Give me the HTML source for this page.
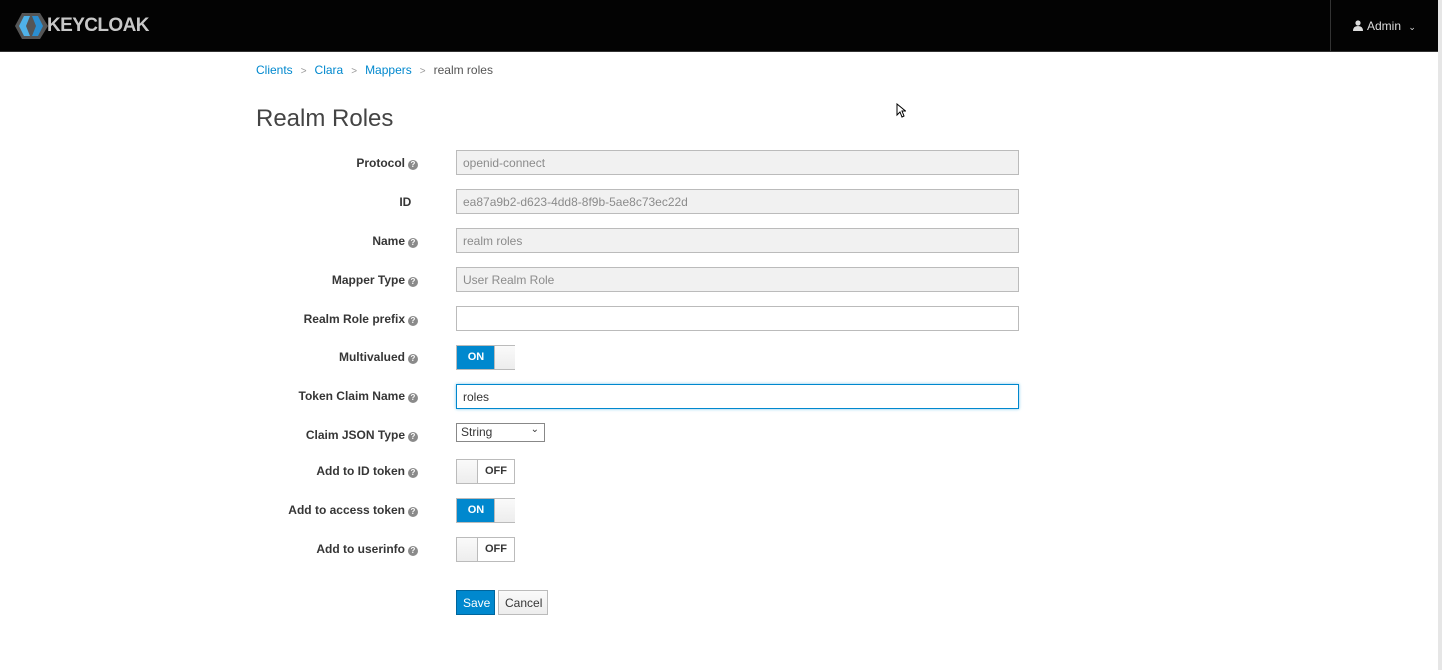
<!DOCTYPE html>
<html><head><style>
*{box-sizing:border-box;margin:0;padding:0}
body{width:1442px;height:670px;background:#fff;font-family:"Liberation Sans",sans-serif;font-size:12px;color:#363636;position:relative;overflow:hidden}
.hdr{position:absolute;left:0;top:0;width:1438px;height:52px;background:#030303;border-bottom:1px solid #333}
.sb{position:absolute;right:0;top:0;width:4px;height:670px;background:#e6e6e6}
.sep{position:absolute;left:1330px;top:0;width:1px;height:52px;background:#333}
.admin{position:absolute;left:1353px;top:19px;color:#ddd;font-size:12px}
.logo{position:absolute;left:14px;top:12px;height:28px}
.logo span{position:absolute;left:33px;top:3px;color:#c8c8c8;font-weight:bold;font-size:19px;letter-spacing:-0.6px}
.bc{position:absolute;left:256px;top:63px;font-size:12px;color:#555}
.bc a{color:#0088ce;text-decoration:none}
.bc i{font-style:normal;color:#999;margin:0 8px;font-size:10px}
h1{position:absolute;left:256px;top:105px;font-size:24px;font-weight:normal;color:#444}
.lbl{position:absolute;right:1024px;font-weight:bold;font-size:12px;text-align:right;white-space:nowrap;color:#363636}
.q{display:inline-block;width:10px;height:10px;border-radius:50%;background:#8a8a8a;color:#fff;font-size:8px;line-height:10px;text-align:center;margin-left:3px;vertical-align:0}
.inp{position:absolute;left:456px;width:563px;height:25px;border:1px solid #bbb;background:#f1f1f1;color:#8b8b8b;padding:5px 6px;font-size:12px}
.tg{position:absolute;left:456px;width:59px;height:25px;border:1px solid #bbb;background:#fff;font-size:11px;font-weight:bold}
.tg .on{position:absolute;left:0;top:0;width:38px;height:23px;background:#0088ce;color:#fff;text-align:center;line-height:23px}
.tg .knob{position:absolute;top:0;width:21px;height:23px;background:linear-gradient(#fafafa,#ededed);border-left:1px solid #bbb}
.tg .off{position:absolute;left:21px;top:0;width:36px;height:23px;text-align:center;line-height:23px;color:#363636;background:#fff}
.btn{position:absolute;top:590px;height:25px;font-size:12px;padding:5px 6px;border:1px solid #bbb}
</style></head><body>
<div class="hdr">
<div class="logo"><svg width="36" height="28" viewBox="0 0 36 28"><polygon points="8,1 26,1 34,14 26,27 8,27 1,14" fill="#555"/><polygon points="10,4 16,4 12,14 16,24 10,24 5,14" fill="#4fb2e8"/><polygon points="24,4 18,4 22,14 18,24 24,24 29,14" fill="#2b8ed0"/></svg><span>KEYCLOAK</span></div>
<div class="sep"></div>
<div class="admin"><svg width="10" height="11" viewBox="0 0 10 11" style="vertical-align:-1px;margin-right:4px"><circle cx="5" cy="3" r="2.6" fill="#ddd"/><path d="M0 11 Q0 6 5 6 Q10 6 10 11Z" fill="#ddd"/></svg>Admin <span style="font-size:9px;margin-left:4px">&#8964;</span></div>
</div>
<div class="sb"></div>
<div class="bc"><a>Clients</a><i>&gt;</i><a>Clara</a><i>&gt;</i><a>Mappers</a><i>&gt;</i>realm roles</div>
<h1>Realm Roles</h1>

<div class="lbl" style="top:156px">Protocol<span class="q">?</span></div>
<div class="inp" style="top:150px">openid-connect</div>
<div class="lbl" style="top:195px;right:1024px">ID&nbsp;&nbsp;</div>
<div class="inp" style="top:189px">ea87a9b2-d623-4dd8-8f9b-5ae8c73ec22d</div>
<div class="lbl" style="top:234px">Name<span class="q">?</span></div>
<div class="inp" style="top:228px">realm roles</div>
<div class="lbl" style="top:273px">Mapper Type<span class="q">?</span></div>
<div class="inp" style="top:267px">User Realm Role</div>
<div class="lbl" style="top:312px">Realm Role prefix<span class="q">?</span></div>
<div class="inp" style="top:306px;background:#fff"></div>
<div class="lbl" style="top:350px">Multivalued<span class="q">?</span></div>
<div class="tg" style="top:345px"><div class="on">ON</div><div class="knob" style="left:37px"></div></div>
<div class="lbl" style="top:389px">Token Claim Name<span class="q">?</span></div>
<div class="inp" style="top:384px;background:#fff;color:#333;border-color:#0088ce;box-shadow:0 0 3px #7cc5ea">roles</div>
<div class="lbl" style="top:428px">Claim JSON Type<span class="q">?</span></div>
<div style="position:absolute;left:456px;top:423px;width:89px;height:19px;border:1px solid #888;background:#fff;padding:1px 4px;font-size:12px">String<span style="position:absolute;right:5px;top:0;font-size:10px">&#8964;</span></div>
<div class="lbl" style="top:464px">Add to ID token<span class="q">?</span></div>
<div class="tg" style="top:459px"><div class="knob" style="left:0;border:none;border-right:1px solid #bbb"></div><div class="off">OFF</div></div>
<div class="lbl" style="top:503px">Add to access token<span class="q">?</span></div>
<div class="tg" style="top:498px"><div class="on">ON</div><div class="knob" style="left:37px"></div></div>
<div class="lbl" style="top:542px">Add to userinfo<span class="q">?</span></div>
<div class="tg" style="top:537px"><div class="knob" style="left:0;border:none;border-right:1px solid #bbb"></div><div class="off">OFF</div></div>

<div class="btn" style="left:456px;width:39px;background:#0088ce;border-color:#00659c;color:#fff">Save</div>
<div class="btn" style="left:498px;width:50px;background:linear-gradient(#fafafa,#ededed);color:#363636">Cancel</div>
<svg style="position:absolute;left:896px;top:103px" width="10" height="15" viewBox="0 0 10 15"><path d="M1 1 L1 12 L4 9 L6 14 L8 13 L6 8 L9.5 8 Z" fill="#fff" stroke="#000" stroke-width="1"/></svg>
</body></html>
